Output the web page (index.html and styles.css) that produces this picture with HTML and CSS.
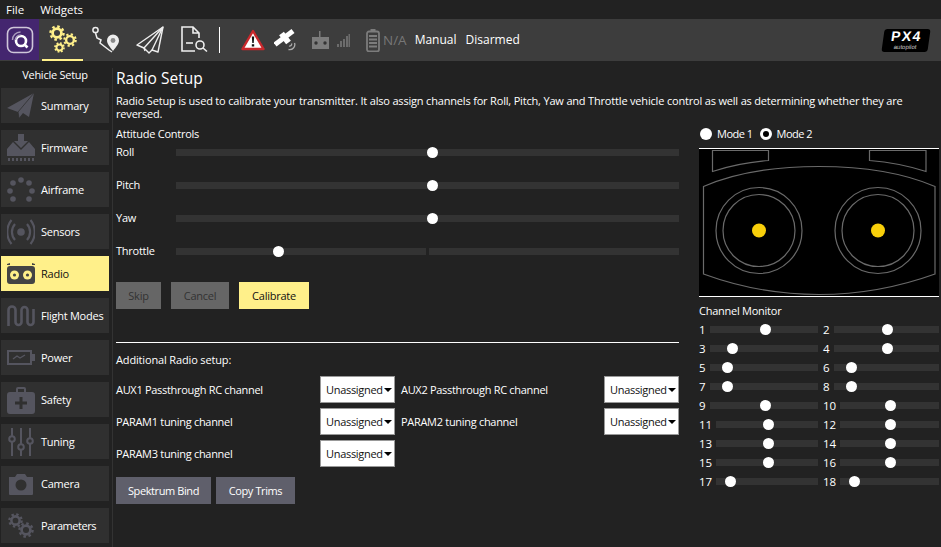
FILE: index.html
```html
<!DOCTYPE html>
<html lang="en">
<head>
    <meta charset="UTF-8">
    <title>Radio Setup</title>
    <link rel="stylesheet" href="styles.css">
</head>
<body>
    <svg class="defs" width="0" height="0">
        <symbol id="gear" viewBox="0 0 20 20">
            <circle cx="10" cy="10" r="5.5" fill="none" stroke="currentColor" stroke-width="3.4"/>
            <circle cx="10" cy="10" r="8.2" fill="none" stroke="currentColor" stroke-width="3" stroke-dasharray="3.2 3.24"/>
        </symbol>
    </svg>

    <div class="menubar">
        <span>File</span>
        <span>Widgets</span>
    </div>

    <div class="toolbar">
        <div class="logo">
            <svg width="28" height="28" viewBox="0 0 28 28" fill="none">
                <rect x="1.5" y="1.5" width="25" height="25" rx="6" stroke="#cfc6da" stroke-width="1.6"/>
                <circle cx="15" cy="15" r="5" stroke="#fff" stroke-width="2.6"/>
                <path d="M18 18l3.5 3.5" stroke="#fff" stroke-width="2.6"/>
                <path d="M6.5 14a8 8 0 0 1 8-8M9.5 14a5 5 0 0 1 5-5" stroke="#a99cbc" stroke-width="1.4"/>
            </svg>
        </div>
        <div class="tool tool-active">
            <svg width="28" height="28" viewBox="0 0 28 28" class="gears">
                <use href="#gear" x="0" y="0" width="16" height="16"/>
                <use href="#gear" x="14" y="8" width="14" height="14"/>
                <use href="#gear" x="5" y="17" width="11" height="11"/>
            </svg>
        </div>
        <div class="tool tool-plan">
            <svg width="28" height="28" viewBox="0 0 28 28" fill="none" stroke="#eee" stroke-width="1.5">
                <circle cx="3.500" cy="4" r="2.600"/>
                <path d="M3.500 7l1.500 5 4 2-1 3 9 7 3 2"/>
                <path d="M21 25c-3-4-6-7-6-10.500a6 6 0 0 1 12 0c0 3.500-3 6.500-6 10.500z" fill="#eee" stroke="none"/>
                <circle cx="21" cy="14.500" r="2.400" fill="#8a8a8a" stroke="none"/>
            </svg>
        </div>
        <div class="tool tool-fly">
            <svg width="28" height="28" viewBox="0 0 28 28" fill="none" stroke="#eee" stroke-width="1.4" stroke-linejoin="round">
                <path d="M27 1L1 19l7 3 5 5 3-3 6 2z"/>
                <path d="M27 1L8 22l1 3M27 1L16 24"/>
            </svg>
        </div>
        <div class="tool tool-analyze">
            <svg width="28" height="28" viewBox="0 0 28 28" fill="none" stroke="#eee" stroke-width="1.6">
                <path d="M15 25H2V1h11l6 6v5M13 1v6h6"/>
                <path d="M6 17h7"/>
                <circle cx="20" cy="19" r="4"/>
                <path d="M23 22l4 3.500"/>
            </svg>
        </div>
        <div class="tool-divider"></div>
        <svg class="warn" width="24" height="22" viewBox="0 0 24 22">
            <path d="M12 2L22.500 20H1.500z" fill="#fff" stroke="#c8282c" stroke-width="2.4" stroke-linejoin="round"/>
            <path d="M10.800 7.500h2.400l-.5 6.500h-1.400zM10.800 15.200h2.400v2.300h-2.400z" fill="#111"/>
        </svg>
        <svg class="sat" width="22" height="22" viewBox="0 0 22 22" fill="none">
            <path d="M1 15.500L19 2" stroke="#fff" stroke-width="5"/>
            <path d="M7.500 4.500L14.500 13.500" stroke="#fff" stroke-width="6"/>
            <path d="M20.500 14a5 5 0 0 1-6 6.500M17.500 14.500a2 2 0 0 1-2.500 2.500" stroke="#aaa" stroke-width="1.3"/>
        </svg>
        <svg class="rc" width="17" height="18" viewBox="0 0 17 18">
            <path d="M7 0h1.500v6H17v12H0V6h7z" fill="#7c7c7c"/>
            <circle cx="4" cy="12" r="1.700" fill="#333"/>
            <circle cx="13" cy="12" r="1.700" fill="#333"/>
        </svg>
        <svg class="signal" width="13" height="13" viewBox="0 0 13 13" fill="#6c6c6c">
            <rect x="0" y="10" width="2" height="3"/>
            <rect x="3" y="7" width="2" height="6"/>
            <rect x="6" y="5" width="2" height="8"/>
            <rect x="9" y="2" width="2" height="11"/>
            <rect x="11.500" y="0" width="1.500" height="13"/>
        </svg>
        <svg class="battery" width="14" height="23" viewBox="0 0 14 23" fill="none">
            <path d="M4.500 0h5v2h-5z" fill="#7c7c7c"/>
            <rect x="1" y="2.500" width="12" height="20" rx="2" stroke="#7c7c7c" stroke-width="1.800"/>
            <path d="M3 7h8M3 10.500h8M3 14h8M3 17.500h8" stroke="#7c7c7c" stroke-width="1.800"/>
        </svg>
        <span class="na">N/A</span>
        <span class="status status-manual">Manual</span>
        <span class="status status-armed">Disarmed</span>
        <div class="px4">
            <div class="px4-text">PX4</div>
            <div class="px4-sub">autopilot</div>
        </div>
    </div>

    <div class="page">
        <div class="sidebar">
            <div class="sidebar-title">Vehicle Setup</div>
            <div class="side-btn">
                <svg width="28" height="28" viewBox="0 0 28 28" fill="#55555f">
                    <path d="M27 1L0 16l11 4 1 6 4-5 6 4z"/>
                    <path d="M27 1L11 20l1 6" fill="none" stroke="#303030" stroke-width=".8"/>
                </svg>
                <span>Summary</span>
            </div>
            <div class="side-btn">
                <svg width="28" height="28" viewBox="0 0 28 28" fill="#55555f">
                    <path d="M11 0h6v7h4l-7 7-7-7h4z"/>
                    <path d="M6 8l8 8 8-8 6 7v7H0v-7z"/>
                    <path d="M1 24h2v3H1zM5 24h2v3H5zM9 24h2v3H9zM13 24h2v3h-2zM17 24h2v3h-2zM21 24h2v3h-2zM25 24h2v3h-2z"/>
                </svg>
                <span>Firmware</span>
            </div>
            <div class="side-btn">
                <svg width="28" height="28" viewBox="0 0 28 28" fill="#55555f">
                    <circle cx="14" cy="4" r="2.800"/>
                    <circle cx="6" cy="7" r="2.800"/>
                    <circle cx="22" cy="7" r="2.800"/>
                    <circle cx="3" cy="15" r="2.800"/>
                    <circle cx="25" cy="15" r="2.800"/>
                    <circle cx="6" cy="23" r="2.800"/>
                    <circle cx="22" cy="23" r="2.800"/>
                </svg>
                <span>Airframe</span>
            </div>
            <div class="side-btn">
                <svg width="28" height="28" viewBox="0 0 28 28" fill="none" stroke="#55555f" stroke-width="2.200">
                    <circle cx="14" cy="14" r="3.800" fill="#55555f" stroke="none"/>
                    <path d="M8 6a12 12 0 0 0 0 16M20 6a12 12 0 0 1 0 16M4.500 2a19 19 0 0 0 0 24M23.500 2a19 19 0 0 1 0 24"/>
                </svg>
                <span>Sensors</span>
            </div>
            <div class="side-btn side-btn-active">
                <svg width="28" height="28" viewBox="0 0 28 28">
                    <path d="M0 4l3-1v2h22V3l3 1v1H0z" fill="#444"/>
                    <rect x="0" y="6" width="28" height="18" rx="3" fill="#444"/>
                    <circle cx="7.500" cy="15" r="4.500" fill="#fff08a"/>
                    <circle cx="20.500" cy="15" r="4.500" fill="#fff08a"/>
                    <circle cx="7.500" cy="15" r="1.600" fill="#444"/>
                    <circle cx="20.500" cy="15" r="1.600" fill="#444"/>
                </svg>
                <span>Radio</span>
            </div>
            <div class="side-btn">
                <svg width="28" height="28" viewBox="0 0 28 28" fill="none" stroke="#55555f" stroke-width="2.600">
                    <path d="M1.500 24V8a3.500 3.500 0 0 1 7 0v12a3 3 0 0 0 6 0V8a3 3 0 0 1 6 0v12a3 3 0 0 0 6 0V7"/>
                </svg>
                <span>Flight Modes</span>
            </div>
            <div class="side-btn">
                <svg width="28" height="28" viewBox="0 0 28 28" fill="none" stroke="#55555f">
                    <rect x="1" y="7" width="23" height="13" stroke-width="2"/>
                    <rect x="25" y="10" width="3" height="7" fill="#55555f" stroke="none"/>
                    <path d="M6 15l4-3 3 2 5-3" stroke-width="1.400"/>
                </svg>
                <span>Power</span>
            </div>
            <div class="side-btn">
                <svg width="28" height="28" viewBox="0 0 28 28">
                    <path d="M9 6V3a2 2 0 0 1 2-2h6a2 2 0 0 1 2 2v3h6a3 3 0 0 1 3 3v16a3 3 0 0 1-3 3H3a3 3 0 0 1-3-3V9a3 3 0 0 1 3-3zM11 6h6V3h-6z" fill="#55555f" fill-rule="evenodd"/>
                    <path d="M12.500 11h3v4.500H20v3h-4.500V23h-3v-4.500H8v-3h4.500z" fill="#303030"/>
                </svg>
                <span>Safety</span>
            </div>
            <div class="side-btn">
                <svg width="28" height="28" viewBox="0 0 28 28" fill="none" stroke="#55555f" stroke-width="2">
                    <path d="M5 0v8M5 14v14M14 0v16M14 22v6M23 0v10M23 16v12"/>
                    <circle cx="5" cy="11" r="2.800"/>
                    <circle cx="14" cy="19" r="2.800"/>
                    <circle cx="23" cy="13" r="2.800"/>
                </svg>
                <span>Tuning</span>
            </div>
            <div class="side-btn">
                <svg width="28" height="28" viewBox="0 0 28 28">
                    <path d="M2 7h6l2-3h8l2 3h6v17a1 1 0 0 1-1 1H3a1 1 0 0 1-1-1z" fill="#55555f"/>
                    <circle cx="14" cy="15" r="5.500" fill="#303030"/>
                </svg>
                <span>Camera</span>
            </div>
            <div class="side-btn">
                <svg class="side-gears" width="28" height="28" viewBox="0 0 28 28">
                    <use href="#gear" x="1" y="1" width="15" height="15"/>
                    <use href="#gear" x="11" y="10" width="16" height="16"/>
                </svg>
                <span class="side-tight">Parameters</span>
            </div>
        </div>

        <div class="content">
            <h1>Radio Setup</h1>
            <p class="intro">Radio Setup is used to calibrate your transmitter. It also assign channels for Roll, Pitch, Yaw and Throttle vehicle control as well as determining whether they are reversed.</p>

            <div class="columns">
                <div class="col-left">
                    <div class="label-line">Attitude Controls</div>
                    <div class="attitude">
                        <div class="att-row">
                            <span class="att-name">Roll</span>
                            <div class="track"><i class="thumb" style="left: 51%"></i></div>
                        </div>
                        <div class="att-row">
                            <span class="att-name">Pitch</span>
                            <div class="track"><i class="thumb" style="left: 51%"></i></div>
                        </div>
                        <div class="att-row">
                            <span class="att-name">Yaw</span>
                            <div class="track"><i class="thumb" style="left: 51%"></i></div>
                        </div>
                        <div class="att-row">
                            <span class="att-name">Throttle</span>
                            <div class="track track-split">
                                <div class="track-half"></div>
                                <div class="track-half"></div>
                                <i class="thumb" style="left: 20.300%"></i>
                            </div>
                        </div>
                    </div>

                    <div class="btn-row">
                        <div class="btn btn-off btn-skip">Skip</div>
                        <div class="btn btn-off btn-cancel">Cancel</div>
                        <div class="btn btn-on">Calibrate</div>
                    </div>

                    <hr class="divider">

                    <div class="label-line additional">Additional Radio setup:</div>
                    <div class="aux-grid">
                        <span>AUX1 Passthrough RC channel</span>
                        <div class="combo">Unassigned</div>
                        <span>AUX2 Passthrough RC channel</span>
                        <div class="combo">Unassigned</div>
                        <span>PARAM1 tuning channel</span>
                        <div class="combo">Unassigned</div>
                        <span>PARAM2 tuning channel</span>
                        <div class="combo">Unassigned</div>
                        <span>PARAM3 tuning channel</span>
                        <div class="combo">Unassigned</div>
                    </div>

                    <div class="bottom-btns">
                        <div class="btn btn-grey">Spektrum Bind</div>
                        <div class="btn btn-grey">Copy Trims</div>
                    </div>
                </div>

                <div class="col-right">
                    <div class="modes">
                        <i class="radio"></i><span>Mode 1</span>
                        <i class="radio radio-checked"></i><span>Mode 2</span>
                    </div>
                    <div class="stick-box">
                        <svg width="240" height="147" viewBox="0 0 240 147" fill="none" stroke="#6a6a6a" stroke-width="1.200">
                            <path d="M13.500 1.500H69.500V11.500C50 13 30 17 13.500 22.500Z"/>
                            <path d="M170.500 1.500H227V22.500C210 17 190 13 170.500 11.500Z"/>
                            <path d="M4.500 37.500C40 22 80 17.500 120 17.500S200 22 236 37.500V125C200 138 160 145.500 120 145.500S40 138 4.500 125Z"/>
                            <circle cx="60" cy="81.500" r="43"/>
                            <circle cx="60" cy="81.500" r="36"/>
                            <circle cx="179" cy="81.500" r="43"/>
                            <circle cx="179" cy="81.500" r="36"/>
                            <circle cx="60" cy="81.500" r="7" fill="#f8cf0a" stroke="none"/>
                            <circle cx="179" cy="81.500" r="7" fill="#f8cf0a" stroke="none"/>
                        </svg>
                    </div>
                    <div class="label-line monitor-title">Channel Monitor</div>
                    <div class="channels">
                        <div class="ch"><span>1</span><div class="track"><i class="thumb" style="left: 51%"></i></div></div>
                        <div class="ch"><span>2</span><div class="track"><i class="thumb" style="left: 50.500%"></i></div></div>
                        <div class="ch"><span>3</span><div class="track"><i class="thumb" style="left: 20.400%"></i></div></div>
                        <div class="ch"><span>4</span><div class="track"><i class="thumb" style="left: 50.500%"></i></div></div>
                        <div class="ch"><span>5</span><div class="track"><i class="thumb" style="left: 15.700%"></i></div></div>
                        <div class="ch"><span>6</span><div class="track"><i class="thumb" style="left: 16.200%"></i></div></div>
                        <div class="ch"><span>7</span><div class="track"><i class="thumb" style="left: 15.700%"></i></div></div>
                        <div class="ch"><span>8</span><div class="track"><i class="thumb" style="left: 16.200%"></i></div></div>
                        <div class="ch"><span>9</span><div class="track"><i class="thumb" style="left: 51%"></i></div></div>
                        <div class="ch"><span>10</span><div class="track"><i class="thumb" style="left: 50.500%"></i></div></div>
                        <div class="ch"><span>11</span><div class="track"><i class="thumb" style="left: 51%"></i></div></div>
                        <div class="ch"><span>12</span><div class="track"><i class="thumb" style="left: 50.500%"></i></div></div>
                        <div class="ch"><span>13</span><div class="track"><i class="thumb" style="left: 51%"></i></div></div>
                        <div class="ch"><span>14</span><div class="track"><i class="thumb" style="left: 50.500%"></i></div></div>
                        <div class="ch"><span>15</span><div class="track"><i class="thumb" style="left: 51%"></i></div></div>
                        <div class="ch"><span>16</span><div class="track"><i class="thumb" style="left: 50.500%"></i></div></div>
                        <div class="ch"><span>17</span><div class="track"><i class="thumb" style="left: 13.700%"></i></div></div>
                        <div class="ch"><span>18</span><div class="track"><i class="thumb" style="left: 14.100%"></i></div></div>
                    </div>
                </div>
            </div>
        </div>
    </div>
</body>
</html>
```

FILE: styles.css
```css
html, body {
    margin: 0;
    height: 100%;
    overflow: hidden;
}
body {
    background-color: #222222;
    color: #ffffff;
    font-family: "Open Sans", sans-serif;
    font-size: 11px;
    letter-spacing: -0.25px;
    line-height: 14px;
    white-space: nowrap;
}
.defs {
    display: block;
}

/* top */
.menubar {
    height: 19px;
    display: flex;
    align-items: center;
    gap: 16px;
    padding-left: 6px;
    font-size: 11.500px;
    letter-spacing: 0;
}
.toolbar {
    height: 42px;
    background-color: #3d3d3d;
    display: flex;
    align-items: center;
}
.logo {
    width: 39px;
    height: 41px;
    margin-bottom: 1px;
    background-color: #44266f;
    display: flex;
    align-items: center;
    justify-content: center;
}
.tool {
    display: flex;
    align-items: center;
    justify-content: center;
    height: 42px;
    box-sizing: border-box;
}
.tool-active {
    width: 41px;
    margin-left: 3px;
    border-bottom: 2px solid #fff08a;
}
.gears {
    color: #fff08a;
}
.tool-plan {
    margin-left: 9px;
}
.tool-fly {
    margin-left: 16px;
}
.tool-analyze {
    margin-left: 16px;
}
.tool-divider {
    width: 1px;
    height: 26px;
    background-color: #ffffff;
    margin-left: 11px;
}
.warn {
    margin-left: 21px;
}
.sat {
    margin-left: 9px;
}
.rc {
    margin-left: 16px;
}
.signal {
    margin-left: 8px;
}
.battery {
    margin-left: 16px;
}
.na {
    color: #777777;
    font-size: 13.500px;
    letter-spacing: 0;
    margin-left: 3px;
}
.status {
    font-size: 12px;
    letter-spacing: 0;
}
.status-manual {
    margin-left: 8px;
}
.status-armed {
    margin-left: 9px;
}
.px4 {
    margin-left: auto;
    margin-right: 12px;
    width: 46px;
    height: 23px;
    background-color: #000000;
    border-radius: 3px;
    transform: skewX(-8deg);
    text-align: center;
}
.px4-text {
    font-family: "Liberation Sans", sans-serif;
    font-weight: bold;
    font-size: 14px;
    line-height: 15px;
    letter-spacing: 1.500px;
}
.px4-sub {
    font-family: "Liberation Sans", sans-serif;
    font-size: 6px;
    line-height: 6px;
    letter-spacing: 0;
    color: #cccccc;
}

/* sidebar */
.page {
    display: flex;
}
.sidebar {
    width: 111px;
    height: 479px;
    margin-top: 7px;
    border-right: 1px solid #333333;
    padding-left: 1px;
    margin-right: 3px;
    flex: none;
    display: flex;
    flex-direction: column;
    gap: 7px;
    overflow: hidden;
}
.sidebar-title {
    width: 108px;
    height: 13px;
    text-align: center;
}
.side-btn {
    width: 108px;
    height: 35px;
    flex: none;
    background-color: #303030;
    display: flex;
    align-items: center;
    gap: 6px;
    padding-left: 6px;
    box-sizing: border-box;
}
.side-btn-active {
    background-color: #fff08a;
    color: #111111;
}
.side-gears {
    color: #55555f;
}
.side-tight {
    letter-spacing: -0.45px;
}

/* content */
.content {
    width: 823px;
    flex: none;
}
h1 {
    font-size: 15.500px;
    font-weight: normal;
    letter-spacing: 0;
    line-height: 20px;
    margin: 7px 0 6px;
}
.intro {
    margin: 0;
    line-height: 13px;
    width: 820px;
    white-space: normal;
    letter-spacing: -0.18px;
}
.columns {
    display: flex;
    gap: 20px;
    margin-top: 7px;
}
.col-left {
    width: 563px;
    flex: none;
}
.col-right {
    width: 240px;
    flex: none;
}
.label-line {
    height: 14px;
}
.additional {
    letter-spacing: -0.15px;
}
.attitude {
    display: flex;
    flex-direction: column;
    gap: 11px;
}
.att-row {
    height: 22px;
    display: flex;
    align-items: center;
}
.att-name {
    width: 60px;
    flex: none;
}
.track {
    position: relative;
    flex: 1;
    height: 7px;
    background-color: #333333;
}
.track-split {
    display: flex;
    gap: 3px;
    background-color: transparent;
}
.track-half {
    flex: 1;
    background-color: #333333;
}
.thumb {
    position: absolute;
    top: -2px;
    width: 11px;
    height: 11px;
    margin-left: -5.500px;
    border-radius: 50%;
    background-color: #ffffff;
}
.ch .thumb {
    margin-left: -5px;
}

/* buttons */
.btn-row {
    display: flex;
    gap: 10px;
    margin-top: 20px;
}
.btn {
    height: 27px;
    display: flex;
    align-items: center;
    justify-content: center;
    box-sizing: border-box;
}
.btn-off {
    background-color: #666666;
    color: #333333;
}
.btn-skip {
    width: 45px;
}
.btn-cancel {
    width: 58px;
}
.btn-on {
    width: 70px;
    background-color: #fff08a;
    color: #111111;
}
.divider {
    border: none;
    height: 1px;
    background-color: #ffffff;
    margin: 33px 0 0;
}
.additional {
    margin-top: 10px;
}
.aux-grid {
    display: grid;
    grid-template-columns: 204px 75px 209px 75px;
    grid-auto-rows: 27px;
    row-gap: 5px;
    align-items: center;
    margin-top: 9px;
    letter-spacing: -0.3px;
}
.aux-grid span:nth-child(4n+3) {
    padding-left: 6px;
}
.combo {
    position: relative;
    height: 27px;
    box-sizing: border-box;
    background-color: #ffffff;
    border: 1px solid #999999;
    color: #111111;
    padding-left: 5px;
    line-height: 25px;
}
.combo::after {
    content: "";
    position: absolute;
    right: 2px;
    top: 11px;
    border-left: 4px solid transparent;
    border-right: 4px solid transparent;
    border-top: 4px solid #000000;
}
.bottom-btns {
    display: flex;
    gap: 5px;
    margin-top: 10px;
    letter-spacing: -0.4px;
}
.btn-grey {
    background-color: #5f5f6b;
}
.btn-grey:first-child {
    width: 95px;
}
.btn-grey:last-child {
    width: 79px;
}

/* right column */
.modes {
    height: 14px;
    display: flex;
    align-items: center;
    padding-left: 1px;
    letter-spacing: -0.5px;
}
.radio {
    width: 12px;
    height: 12px;
    border-radius: 50%;
    background-color: #ffffff;
    margin-right: 5px;
    box-sizing: border-box;
}
.radio-checked {
    background-color: #000000;
    border: 3px solid #ffffff;
    margin-left: 7px;
}
.stick-box {
    margin-top: 7px;
    height: 147px;
    background-color: #000000;
    border-top: 1px solid #ffffff;
    border-bottom: 1px solid #ffffff;
}
.stick-box svg {
    display: block;
}
.monitor-title {
    margin-top: 7px;
}
.channels {
    display: grid;
    grid-template-columns: 119px 116px;
    column-gap: 5px;
    row-gap: 5px;
    margin-top: 4px;
}
.ch {
    height: 14px;
    display: flex;
    align-items: center;
    gap: 4px;
    letter-spacing: 0;
    font-size: 11.500px;
}
.ch span {
    flex: none;
    padding-top: 1px;
}
```
